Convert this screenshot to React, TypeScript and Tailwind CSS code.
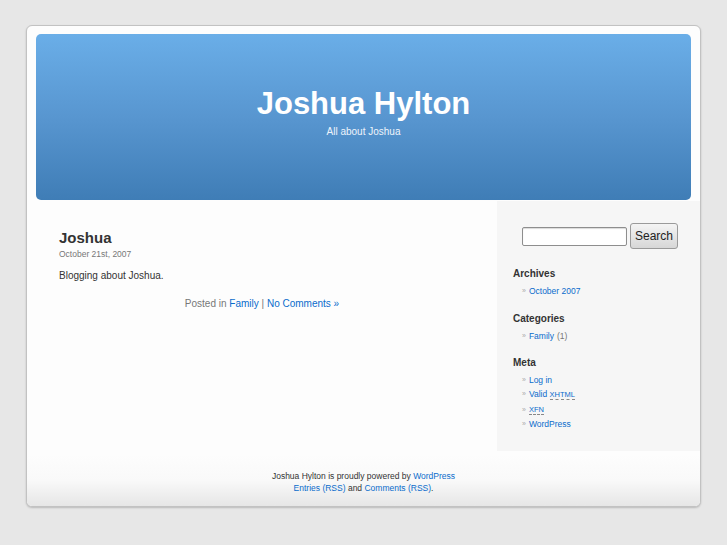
import React from "react";

const font = { fontFamily: '"Liberation Sans", Arial, sans-serif' };

function SideHeading({ children }: { children: React.ReactNode }) {
  return <h2 className="text-[10px] font-bold leading-none text-[#333]">{children}</h2>;
}

function SideItem({ children }: { children: React.ReactNode }) {
  return (
    <li className="flex items-center pl-[9px] text-[8.5px] leading-[14.5px]">
      <span className="mr-[3px] text-[7px] text-[#aaa]">&raquo;</span>
      {children}
    </li>
  );
}

export default function App() {
  return (
    <div className="min-h-screen bg-[#e7e7e7] px-[26px] pt-[25px]" style={font}>
      <div className="w-[675px] overflow-hidden rounded-[6px] border border-[#c2c2c2] bg-[#fdfdfd] shadow-[0_1px_2px_rgba(0,0,0,0.2)]">
        {/* header */}
        <div className="px-[9px] pt-[8px]">
          <div className="flex h-[166px] flex-col items-center rounded-[5px] bg-gradient-to-b from-[#6aaee8] via-[#5896d0] to-[#3f7db6] pt-[54px] text-white">
            <h1 className="text-[31px] font-bold leading-none">Joshua Hylton</h1>
            <p className="mt-[8px] text-[10px] leading-none text-[#eef4fb]">All about Joshua</p>
          </div>
        </div>

        {/* body */}
        <div className="mt-[1px] flex h-[254px]">
          <main className="w-[470px] pl-[32px] pr-[32px] pt-[29px]">
            <h2 className="text-[15px] font-bold leading-none text-[#333]">Joshua</h2>
            <p className="mt-[5px] text-[8.5px] leading-none text-[#777]">October 21st, 2007</p>
            <p className="mt-[12px] text-[10px] leading-none text-[#333]">Blogging about Joshua.</p>
            <p className="-ml-[32px] mt-[18px] w-[470px] text-center text-[10px] leading-none text-[#777]">
              Posted in <a className="text-[#0a6ccc]">Family</a> |{" "}
              <a className="text-[#0a6ccc]">No Comments &raquo;</a>
            </p>
          </main>

          <aside className="h-[250px] w-[203px] bg-[#f6f6f6] pl-[16px] pt-[22px]">
            <div className="flex items-center pl-[9px]">
              <input className="h-[19px] w-[105px] rounded-[2px] border border-[#8e8e8e] bg-white shadow-[inset_0_1px_1px_rgba(0,0,0,0.15)]" />
              <button className="ml-[3px] h-[26px] w-[48px] rounded-[3px] border border-[#9a9a9a] bg-gradient-to-b from-[#f4f4f4] to-[#d7d7d7] text-[12px] text-[#222]">
                Search
              </button>
            </div>

            <div className="mt-[20px]">
              <SideHeading>Archives</SideHeading>
              <ul className="mt-[4.5px]">
                <SideItem>
                  <a className="text-[#0a6ccc]">October 2007</a>
                </SideItem>
              </ul>
            </div>

            <div className="mt-[16px]">
              <SideHeading>Categories</SideHeading>
              <ul className="mt-[4.5px]">
                <SideItem>
                  <a className="text-[#0a6ccc]">Family</a>
                  <span className="ml-[3px] text-[#777]">(1)</span>
                </SideItem>
              </ul>
            </div>

            <div className="mt-[15px]">
              <SideHeading>Meta</SideHeading>
              <ul className="mt-[4.5px] [&>li]:leading-[14.3px]">
                <SideItem>
                  <a className="text-[#0a6ccc]">Log in</a>
                </SideItem>
                <SideItem>
                  <a className="text-[#0a6ccc]">
                    Valid{" "}
                    <abbr className="border-b border-dashed border-[#888] text-[7.5px] no-underline">XHTML</abbr>
                  </a>
                </SideItem>
                <SideItem>
                  <a className="text-[#0a6ccc]">
                    <abbr className="border-b border-dashed border-[#888] text-[7.5px] no-underline">XFN</abbr>
                  </a>
                </SideItem>
                <SideItem>
                  <a className="text-[#0a6ccc]">WordPress</a>
                </SideItem>
              </ul>
            </div>
          </aside>
        </div>

        {/* footer */}
        <footer className="flex h-[51px] flex-col items-center bg-gradient-to-b from-[#fdfdfd] via-[#f9f9f9] to-[#e6e6e6] pt-[15px] text-[8.5px] leading-[12px] text-[#333]">
          <p>
            Joshua Hylton is proudly powered by <a className="text-[#0a6ccc]">WordPress</a>
          </p>
          <p>
            <a className="text-[#0a6ccc]">Entries (RSS)</a> and <a className="text-[#0a6ccc]">Comments (RSS)</a>.
          </p>
        </footer>
      </div>
    </div>
  );
}
